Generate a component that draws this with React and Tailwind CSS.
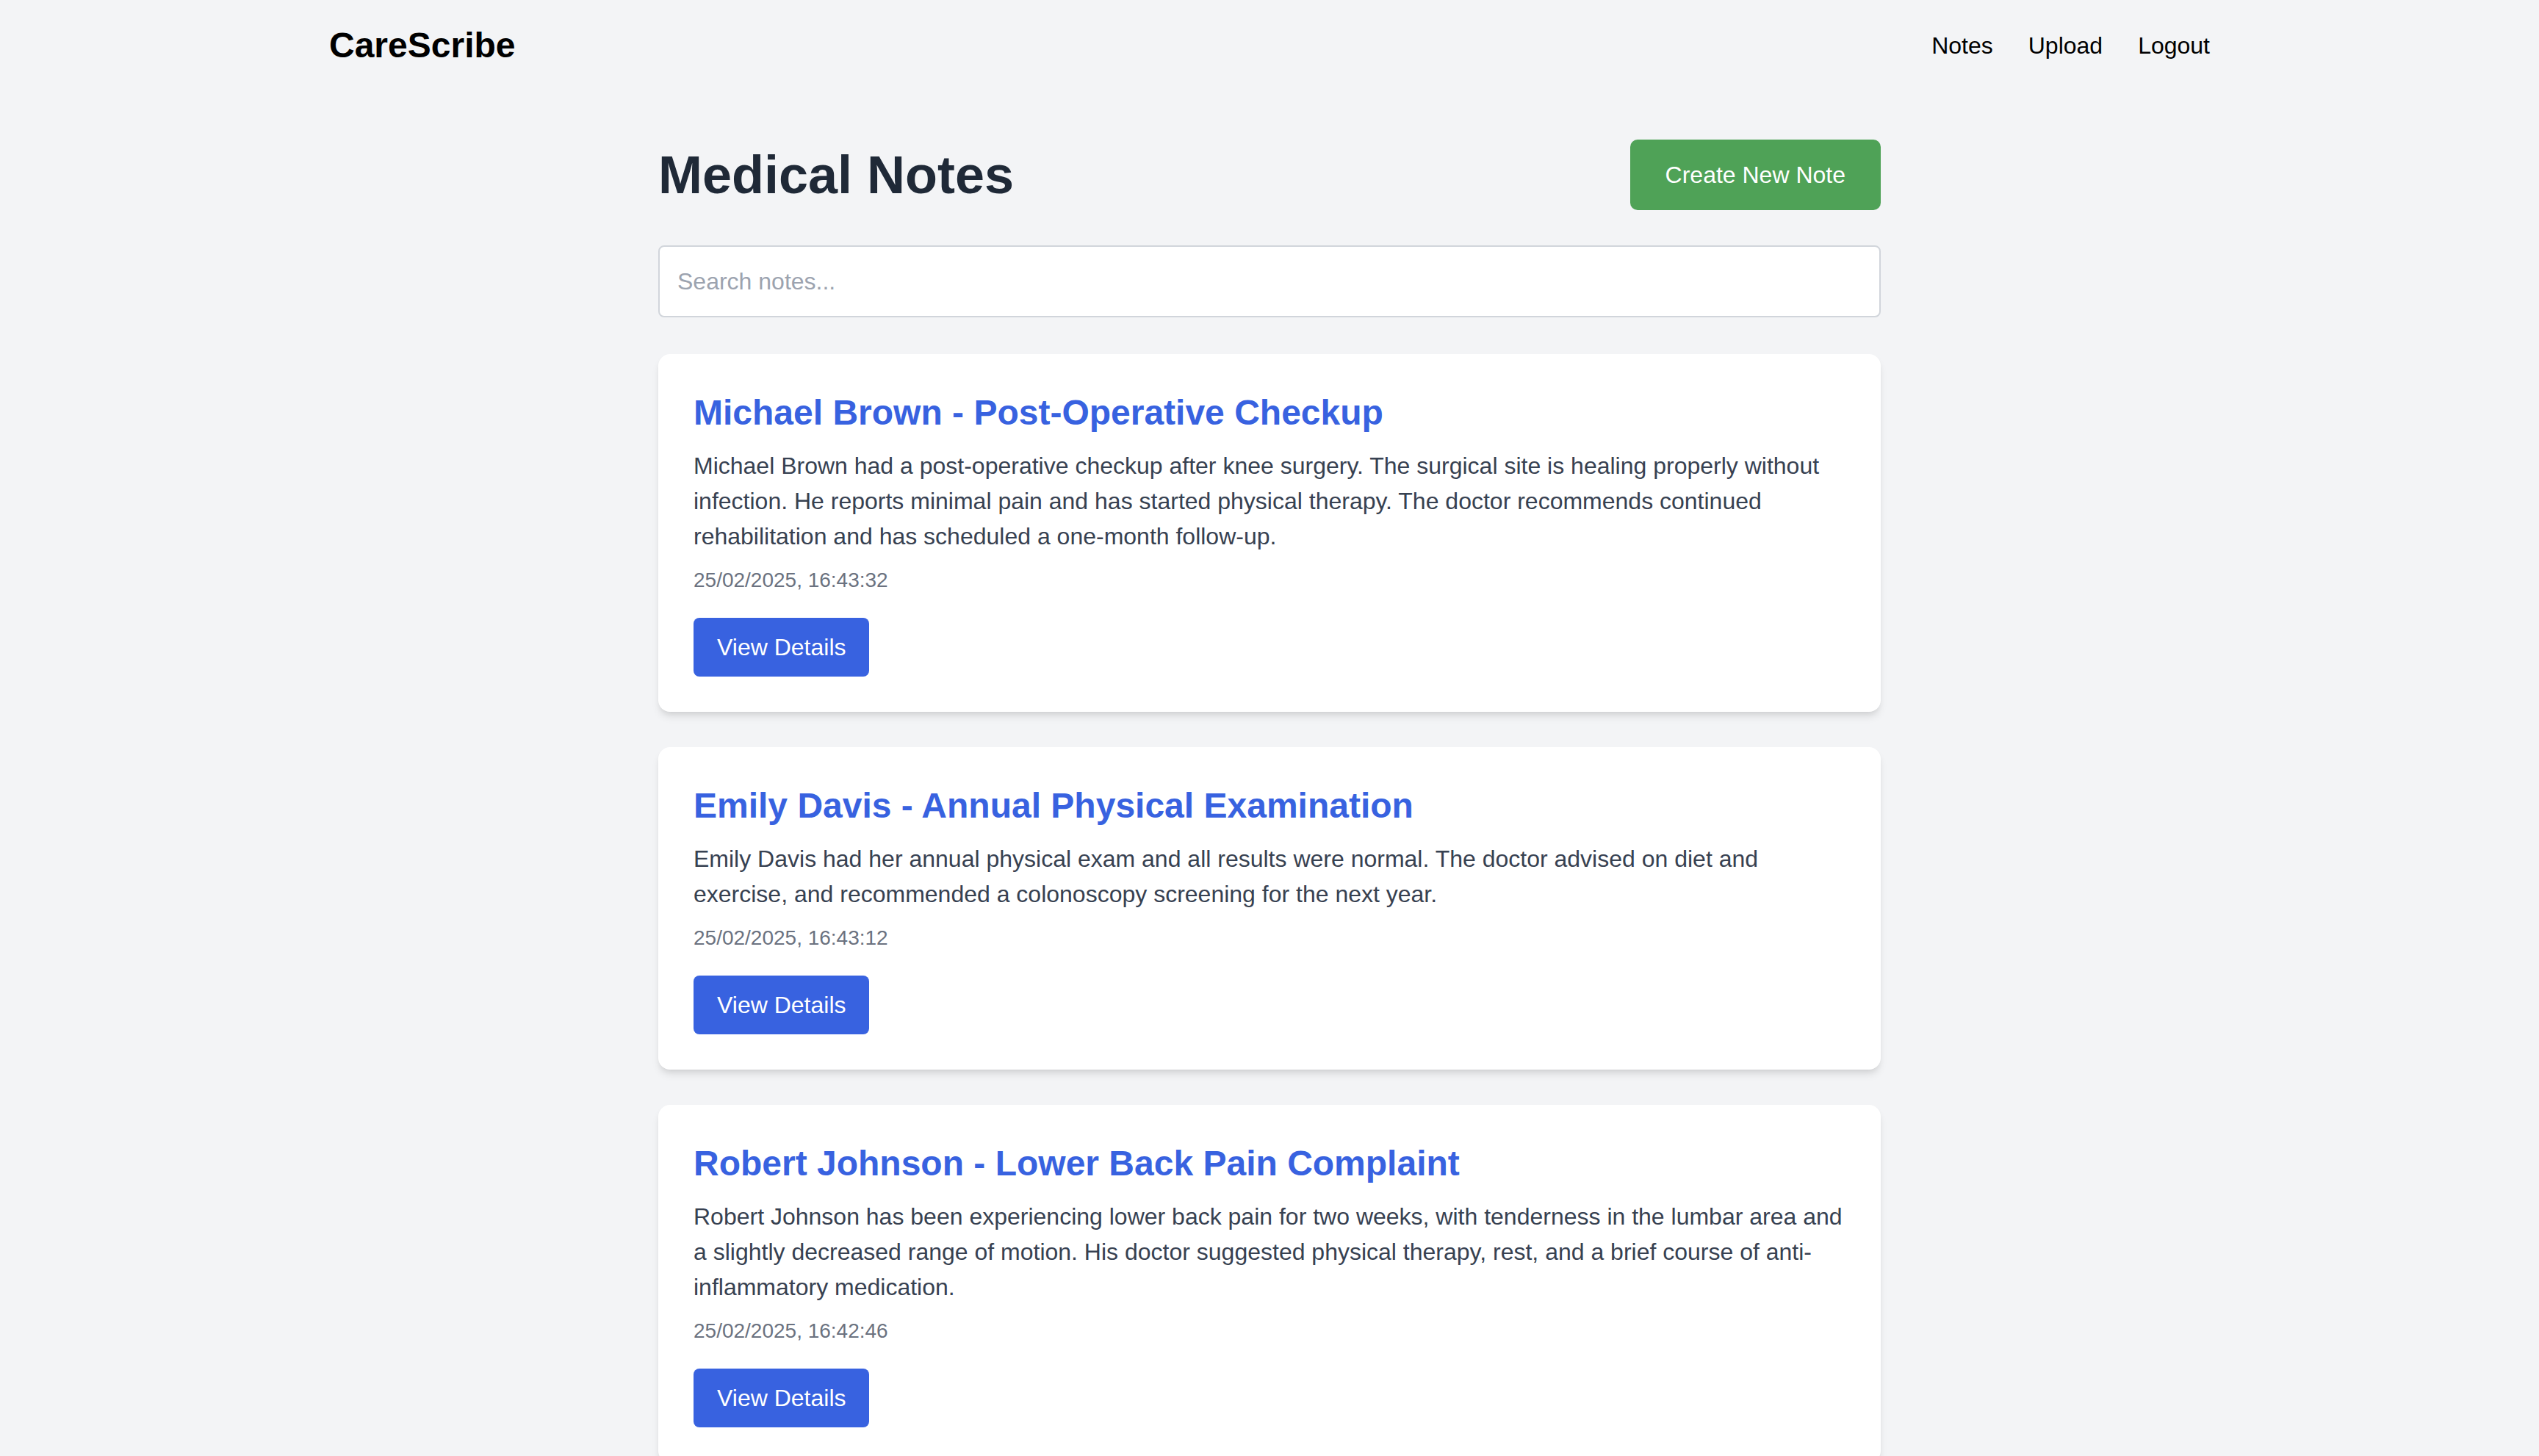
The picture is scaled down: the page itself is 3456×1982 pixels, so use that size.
import React from "react";

const notes = [
  {
    title: "Michael Brown - Post-Operative Checkup",
    body: "Michael Brown had a post-operative checkup after knee surgery. The surgical site is healing properly without infection. He reports minimal pain and has started physical therapy. The doctor recommends continued rehabilitation and has scheduled a one-month follow-up.",
    date: "25/02/2025, 16:43:32",
  },
  {
    title: "Emily Davis - Annual Physical Examination",
    body: "Emily Davis had her annual physical exam and all results were normal. The doctor advised on diet and exercise, and recommended a colonoscopy screening for the next year.",
    date: "25/02/2025, 16:43:12",
  },
  {
    title: "Robert Johnson - Lower Back Pain Complaint",
    body: "Robert Johnson has been experiencing lower back pain for two weeks, with tenderness in the lumbar area and a slightly decreased range of motion. His doctor suggested physical therapy, rest, and a brief course of anti-inflammatory medication.",
    date: "25/02/2025, 16:42:46",
  },
];

export default function App() {
  return (
    <div
      className="min-h-screen bg-[#f3f4f6] text-black"
      style={{ fontFamily: '"Liberation Sans", Arial, sans-serif' }}
    >
      <nav className="py-[30px]">
        <div className="max-w-[2560px] mx-auto flex items-center justify-between">
          <div className="text-[48px] leading-[64px] font-bold">CareScribe</div>
          <div className="flex items-center gap-[48px] text-[32px] leading-[48px]">
            <a>Notes</a>
            <a>Upload</a>
            <a>Logout</a>
          </div>
        </div>
      </nav>
      <main className="max-w-[1792px] mx-auto px-[64px] pt-[66px] pb-[64px]">
        <div className="flex items-center justify-between mb-[48px]">
          <h1 className="text-[72px] leading-[80px] font-bold text-[#1f2937]">Medical Notes</h1>
          <button className="bg-[#4fa257] text-white text-[32px] leading-[48px] px-[48px] py-[24px] rounded-[10px]">
            Create New Note
          </button>
        </div>
        <input
          type="text"
          placeholder="Search notes..."
          className="w-full h-[98px] px-[24px] text-[32px] bg-white border-2 border-[#d1d5db] rounded-[8px] placeholder:text-[#9ca3af] mb-[50px] outline-none"
        />
        <div className="flex flex-col gap-[48px]">
          {notes.map((n) => (
            <div
              key={n.title}
              className="bg-white rounded-[16px] px-[48px] pt-[48px] pb-[48px] shadow-[0_8px_12px_-2px_rgba(0,0,0,0.1),0_4px_8px_-4px_rgba(0,0,0,0.1)]"
            >
              <h2 className="text-[48px] leading-[64px] font-bold text-[#3862e0] mb-[16px]">{n.title}</h2>
              <p className="text-[32px] leading-[48px] text-[#374151]">{n.body}</p>
              <p className="text-[28px] leading-[40px] text-[#6b7280] mt-[16px]">{n.date}</p>
              <button className="mt-[31px] bg-[#3862e0] text-white text-[32px] leading-[48px] px-[32px] py-[16px] rounded-[8px]">
                View Details
              </button>
            </div>
          ))}
        </div>
      </main>
    </div>
  );
}
